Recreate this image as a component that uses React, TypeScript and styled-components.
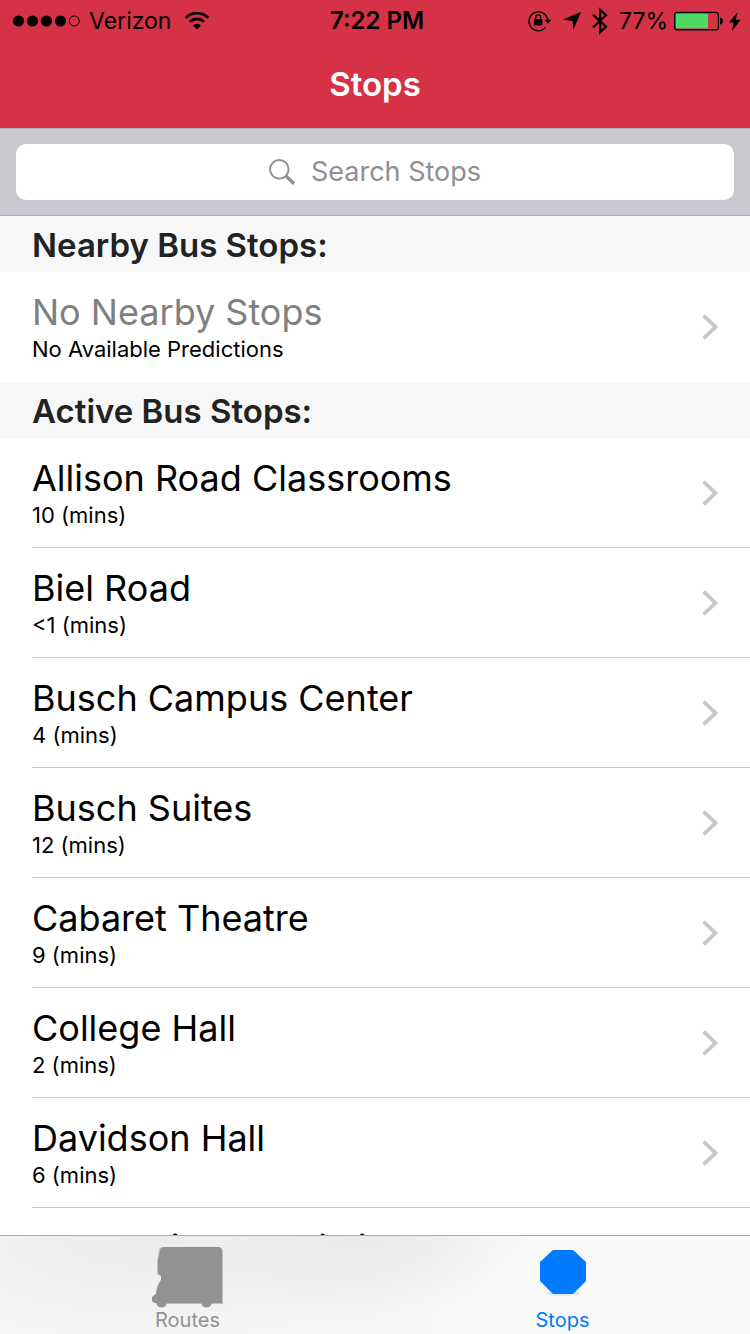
import React from "react";
import styled, { createGlobalStyle } from "styled-components";

const GlobalStyle = createGlobalStyle`
  *, *::before, *::after { box-sizing: border-box; }
  body {
    margin: 0;
    background: #fff;
    color: #000;
    font-family: Inter, "Liberation Sans", sans-serif;
  }
`;

const Screen = styled.div`
  display: flex;
  flex-direction: column;
  height: 100vh;
`;

const Header = styled.header`
  flex: none;
  background: #d53345;
`;

const StatusBar = styled.div`
  display: grid;
  grid-template-columns: 1fr auto 1fr;
  align-items: center;
  height: 40px;
  padding: 2px 9px 0 13px;
  font-size: 23px;
  line-height: 28px;
`;

const StatusGroup = styled.div<{ $end?: boolean }>`
  display: flex;
  align-items: center;
  justify-content: ${(p) => (p.$end ? "flex-end" : "flex-start")};
  gap: ${(p) => (p.$end ? "11px" : "9px")};
`;

const Carrier = styled.span`
  display: flex;
  align-items: center;
  gap: 14px;
`;

const Battery = styled.span`
  display: flex;
  align-items: center;
  gap: 6px;
`;

const Clock = styled.time`
  font-size: 24px;
  font-weight: 600;
`;

const NavTitle = styled.h1`
  margin: 0;
  height: 88px;
  font-size: 33px;
  font-weight: 600;
  line-height: 88px;
  text-align: center;
  color: #fff;
`;

const SearchBar = styled.form`
  flex: none;
  padding: 15px 16px;
  background: #c9c8ce;
  border-top: 1px solid #b4b3b8;
  border-bottom: 1px solid #b2b1b6;
`;

const SearchField = styled.label`
  display: flex;
  align-items: center;
  justify-content: center;
  gap: 16px;
  height: 56px;
  border-radius: 10px;
  background: #fff;
`;

const SearchInput = styled.input`
  field-sizing: content;
  padding: 0;
  border: 0;
  outline: 0;
  background: none;
  font: 400 27px/34px Inter, "Liberation Sans", sans-serif;
  color: #000;
  &::placeholder { color: #8e8e93; opacity: 1; }
`;

const Content = styled.main`
  flex: 1;
  min-height: 0;
  overflow-y: auto;
  scrollbar-width: none;
`;

const SectionTitle = styled.h2`
  margin: 0;
  padding: 0 32px;
  background: #f7f7f7;
  color: #222;
  font-size: 33px;
  font-weight: 600;
  line-height: 58px;
  height: 56px;
`;

const StopList = styled.ul`
  margin: 0;
  padding: 0 0 0 32px;
  list-style: none;
`;

const StopItem = styled.li<{ $divider: boolean }>`
  height: 110px;
  border-bottom: 1px solid ${(p) => (p.$divider ? "#c8c7cc" : "transparent")};
`;

const StopLink = styled.a`
  display: flex;
  align-items: center;
  justify-content: space-between;
  height: 100%;
  padding-right: 32px;
  color: inherit;
  text-decoration: none;
`;

const StopText = styled.span`
  display: flex;
  flex-direction: column;
`;

const StopName = styled.span<{ $muted?: boolean }>`
  font-size: 36px;
  line-height: 44px;
  color: ${(p) => (p.$muted ? "#808080" : "#000")};
`;

const StopTime = styled.span`
  font-size: 22px;
  line-height: 30px;
`;

const TabBar = styled.nav`
  flex: none;
  display: grid;
  grid-template-columns: 1fr 1fr;
  height: 99px;
  border-top: 1px solid #acacac;
  background:
    radial-gradient(ellipse 180px 80px at 48% 0, #e9e9e9, transparent),
    radial-gradient(ellipse 260px 100px at 20% 0, #ececec, transparent),
    linear-gradient(90deg, #f5f5f5 50%, #f9f9f9 66%);
`;

const Tab = styled.a<{ $active?: boolean }>`
  display: flex;
  flex-direction: column;
  align-items: center;
  justify-content: flex-end;
  padding-bottom: 2px;
  font-size: 20px;
  line-height: 24px;
  text-decoration: none;
  color: ${(p) => (p.$active ? "#007aff" : "#929292")};
`;

const TabIcon = styled.span`
  display: flex;
  justify-content: center;
  height: 62px;
`;

const SignalDots = () => (
  <svg width="67" height="12" viewBox="0 0 67 12" aria-hidden="true">
    {[0, 1, 2, 3].map((i) => (
      <circle key={i} cx={5.5 + i * 14} cy="6" r="5.6" />
    ))}
    <circle cx="61.3" cy="6" r="5" fill="none" stroke="#000" strokeWidth="1" />
  </svg>
);

const WifiIcon = () => (
  <svg width="24" height="18" viewBox="0 0 24 18" aria-hidden="true">
    <g fill="none" stroke="#000" strokeWidth="2.7">
      <path d="M.9 5.8a15.7 15.7 0 0 1 22.2 0" />
      <path d="M4.9 9.8a10 10 0 0 1 14.2 0" />
    </g>
    <path d="M12 17.6l-4-4.1a5.7 5.7 0 0 1 8 0z" />
  </svg>
);

const RotationLockIcon = () => (
  <svg width="24" height="22" viewBox="0 0 24 22" aria-hidden="true">
    <path
      d="M17.6 17.4A9.4 9.4 0 1 1 19.7 10"
      fill="none"
      stroke="#000"
      strokeWidth="1.4"
    />
    <path d="M16.4 9.8h7l-3.5 4z" />
    <rect x="6" y="9" width="8.4" height="6.4" rx=".6" />
    <path d="M7.7 9.5V7.3a2.5 2.5 0 0 1 5 0v2.2" fill="none" stroke="#000" strokeWidth="1.3" />
  </svg>
);

const LocationIcon = () => (
  <svg width="18" height="18" viewBox="0 0 18 18" aria-hidden="true">
    <path d="M18 0L10.4 17.8 9.6 9 0 7.6z" />
  </svg>
);

const BluetoothIcon = () => (
  <svg width="16" height="28" viewBox="0 0 16 28" aria-hidden="true">
    <path
      d="M1 7.6l13 12.2L8.2 25.2V2.8L14 8.2 1 20.4"
      fill="none"
      stroke="#000"
      strokeWidth="2.2"
    />
  </svg>
);

const BatteryIcon = () => (
  <svg width="49" height="20" viewBox="0 0 49 20" aria-hidden="true">
    <rect x=".6" y="1.3" width="43.8" height="17.6" rx="2.5" fill="none" stroke="#000" strokeWidth="1.2" />
    <rect x="2" y="2.8" width="32" height="14.6" fill="#4cd964" />
    <path d="M46 6.8q3 .4 3 3.4t-3 3.4z" />
  </svg>
);

const BoltIcon = () => (
  <svg width="12" height="19" viewBox="0 0 12 19" aria-hidden="true">
    <path d="M8.6 0L0 10.6h4.7L3 19l8.6-11.2H6.8z" />
  </svg>
);

const SearchIcon = () => (
  <svg width="26" height="26" viewBox="0 0 26 26" fill="none" stroke="#8e8e93" aria-hidden="true">
    <circle cx="10.3" cy="10.3" r="9.3" strokeWidth="1.9" />
    <path d="M17 17l8 7.8" strokeWidth="3.2" />
  </svg>
);

const Chevron = () => (
  <svg width="16" height="26" viewBox="0 0 16 26" aria-hidden="true">
    <path d="M1.6 1.6L13.4 13 1.6 24.4" fill="none" stroke="#c7c7cc" strokeWidth="3.8" />
  </svg>
);

const BusIcon = () => (
  <svg width="72" height="62" viewBox="0 0 72 62" aria-hidden="true">
    <path
      d="M11 1H67Q71 2 71 5V58H5L3 50 5 41 9 34V29L5 28V15L7 4Q8 1 11 1Z"
      fill="#c0c0c0"
    />
    <path
      d="M12 1H66Q70 1 70 5V57H2L0 55V51L4 48 6 39 9 34V30L6 28V15L8 4Q9 1 12 1Z"
      fill="#929292"
    />
    <circle cx="9.500" cy="56" r="5.500" fill="#929292" />
    <circle cx="54.500" cy="56" r="5.500" fill="#929292" />
  </svg>
);

const StopSignIcon = () => (
  <svg width="46" height="50" viewBox="0 0 46 50" aria-hidden="true">
    <ellipse cx="23" cy="47.500" rx="17" ry="2.500" fill="#d9e8fa" />
    <path d="M13 4H33L46 16V35L33 48H13L0 35V16Z" fill="#007aff" />
  </svg>
);

interface Stop {
  name: string;
  time: string;
  muted?: boolean;
}

const nearby: Stop[] = [
  { name: "No Nearby Stops", time: "No Available Predictions", muted: true },
];

const active: Stop[] = [
  { name: "Allison Road Classrooms", time: "10 (mins)" },
  { name: "Biel Road", time: "<1 (mins)" },
  { name: "Busch Campus Center", time: "4 (mins)" },
  { name: "Busch Suites", time: "12 (mins)" },
  { name: "Cabaret Theatre", time: "9 (mins)" },
  { name: "College Hall", time: "2 (mins)" },
  { name: "Davidson Hall", time: "6 (mins)" },
  { name: "Food Science Building", time: "" },
];

const StopSection = ({ title, stops }: { title: string; stops: Stop[] }) => (
  <section>
    <SectionTitle>{title}</SectionTitle>
    <StopList>
      {stops.map((stop, i) => (
        <StopItem key={stop.name} $divider={i < stops.length - 1}>
          <StopLink href="#stop">
            <StopText>
              <StopName $muted={stop.muted}>{stop.name}</StopName>
              <StopTime>{stop.time || "\u00a0"}</StopTime>
            </StopText>
            <Chevron />
          </StopLink>
        </StopItem>
      ))}
    </StopList>
  </section>
);

export default function App() {
  return (
    <>
      <GlobalStyle />
      <Screen>
        <Header>
          <StatusBar>
            <StatusGroup>
              <SignalDots />
              <Carrier>
                Verizon
                <WifiIcon />
              </Carrier>
            </StatusGroup>
            <Clock>7:22 PM</Clock>
            <StatusGroup $end>
              <RotationLockIcon />
              <LocationIcon />
              <BluetoothIcon />
              <Battery>
                <span>77%</span>
                <BatteryIcon />
                <BoltIcon />
              </Battery>
            </StatusGroup>
          </StatusBar>
          <NavTitle>Stops</NavTitle>
        </Header>
        <SearchBar role="search">
          <SearchField>
            <SearchIcon />
            <SearchInput type="text" placeholder="Search Stops" aria-label="Search Stops" />
          </SearchField>
        </SearchBar>
        <Content>
          <StopSection title="Nearby Bus Stops:" stops={nearby} />
          <StopSection title="Active Bus Stops:" stops={active} />
        </Content>
        <TabBar>
          <Tab href="#routes">
            <TabIcon>
              <BusIcon />
            </TabIcon>
            Routes
          </Tab>
          <Tab href="#stops" $active aria-current="page">
            <TabIcon>
              <StopSignIcon />
            </TabIcon>
            Stops
          </Tab>
        </TabBar>
      </Screen>
    </>
  );
}
